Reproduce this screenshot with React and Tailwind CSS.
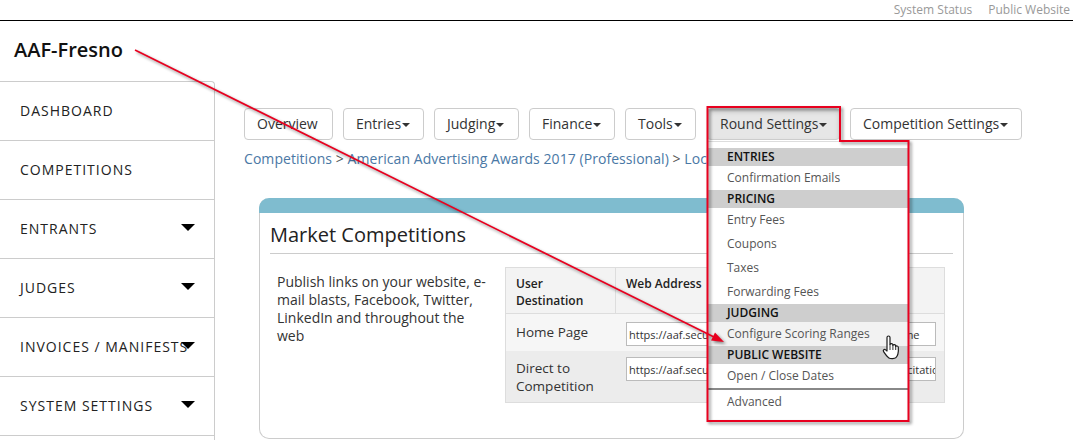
import React from 'react';

const tabs = [
  { label: 'Entries', w: 'w-[81px]' },
  { label: 'Judging', w: 'w-[85px]' },
  { label: 'Finance', w: 'w-[86px]' },
  { label: 'Tools', w: 'w-[71px]' },
];
const navItems = [
  { label: 'Dashboard' },
  { label: 'Competitions' },
  { label: 'Entrants', caret: true },
  { label: 'Judges', caret: true },
  { label: 'Invoices / Manifests', caret: true },
  { label: 'System Settings', caret: true },
  { label: '' },
];

const menu = [
  { head: 'ENTRIES', items: ['Confirmation Emails'] },
  { head: 'PRICING', items: ['Entry Fees', 'Coupons', 'Taxes', 'Forwarding Fees'] },
  { head: 'JUDGING', items: ['Configure Scoring Ranges'] },
  { head: 'PUBLIC WEBSITE', items: ['Open / Close Dates'] },
];

const Caret = () => (
  <span className="ml-px inline-block border-x-[4px] border-t-[4px] border-x-transparent border-t-[#333] align-middle"></span>
);

const Btn = ({ children, active, caret, width }) => (
  <button
    className={`h-[32px] shrink-0 rounded border border-[#ccc] pb-[2px] pl-[12px] text-left text-[14px] text-[#333] whitespace-nowrap ${width} ${active ? 'bg-[#e6e6e6] shadow-[inset_0_3px_5px_rgba(0,0,0,0.125)]' : 'bg-white'}`}
  >
    {children}
    {caret && <Caret />}
  </button>
);

const Hand = () => (
  <svg className="absolute left-[174px] top-[193px]" width="19" height="25" viewBox="0 0 19 25">
    <path
      d="M5 2.5c0-2 3-2 3 0v7c.4-1.2 2.6-1.2 2.9.2v.6c.5-1.100 2.600-.9 2.800.5v.7c.6-.9 2.500-.6 2.600.8.200 2.200.100 4.700-.4 6.700-.4 1.600-1.100 2.800-2 3.700-1.200 1.200-5.500 1.200-7 .3-1.800-1.100-3.800-4-5.300-6.300-1-1.500.8-3 2-1.800L5 16z"
      fill="#fff"
      stroke="#1c1c1c"
      strokeWidth="1.2"
      strokeLinejoin="round"
    />
    <path d="M8 9.500v5.500M10.900 10v5M13.700 11v4" stroke="#1c1c1c" strokeWidth="0.9" fill="none" />
  </svg>
);

const Dropdown = () => (
  <div className="absolute left-[1px] top-[33px] z-10 h-[280px] w-[200px] border-t border-[#ddd] bg-white pt-[6px] text-[12px] leading-[24px] text-[#555]">
    {menu.map((group) => (
      <div key={group.head}>
        <div className="h-[18px] bg-[#cecece] pl-[19px] font-semibold leading-[18px] text-[#111]">{group.head}</div>
        {group.items.map((item) => (
          <div key={item} className={`h-[24px] pl-[19px] ${item.startsWith('Configure') ? 'bg-[#f2f2f2]' : ''}`}>{item}</div>
        ))}
      </div>
    ))}
    <div className="h-[2px] bg-[#888]"></div>
    <div className="pl-[19px]">Advanced</div>
    <Hand />
  </div>
);

const Annotation = () => (
  <svg className="absolute left-0 top-0 z-20 pointer-events-none drop-shadow-[2px_2px_1.5px_rgba(0,0,0,0.45)]" width="1073" height="440" viewBox="0 0 1073 440">
    <path d="M707.5 107 H840 V141 H908.5 V421 H707.500 Z" fill="none" stroke="#e8001f" strokeWidth="2" />
    <path d="M135 50 L716 338" stroke="#e8001f" strokeWidth="1.7" fill="none" />
    <path d="M724 342 L711 340.500 L715 332.500 Z" fill="#e8001f" />
  </svg>
);

export default function App() {
  return (
    <div className="relative h-[440px] w-[1073px] overflow-hidden bg-white font-['Open_Sans',sans-serif] text-[#333]">
      <div className="flex h-[21px] items-center justify-end gap-[16px] border-b border-black pr-[3px] text-[12px] text-[#999]">
        <span>System Status</span>
        <span>Public Website</span>
      </div>

      <div className="h-[60px] pl-[14px] pt-[15px] text-[20px] font-semibold leading-[28px] text-[#111]">AAF-Fresno</div>

      <div className="flex">
        <div className="w-[215px] shrink-0 rounded-tr border-r border-t border-[#ccc]">
          {navItems.map((item, i) => (
            <div key={i} className="relative flex h-[59px] items-center border-b border-[#ccc] pb-[2px] pl-[20px] text-[14px] uppercase tracking-[1px] text-[#222] whitespace-nowrap">
              {item.label}
              {item.caret && (
                <span className="absolute right-[19px] top-[24px] border-x-[7px] border-t-[7px] border-x-transparent border-t-black"></span>
              )}
            </div>
          ))}
        </div>

        <div className="min-w-0 flex-1 pl-[29px] pt-[27px]">
          <div className="flex gap-[10px]">
            <Btn width="w-[89px]">Overview</Btn>
            {tabs.map((t) => <Btn key={t.label} caret width={t.w}>{t.label}</Btn>)}
            <div className="relative ml-px">
              <Btn active caret width="w-[133px]">Round Settings</Btn>
              <Dropdown />
            </div>
            <Btn caret width="w-[172px]">Competition Settings</Btn>
          </div>

          <div className="mt-[9px] text-[14px] leading-[20px] tracking-[0.06px] text-[#4a78a5] whitespace-nowrap">
            Competitions <span className="text-[#555]">&gt;</span> American Advertising Awards 2017 (Professional) <span className="text-[#555]">&gt;</span> Locations
          </div>

          <div className="ml-[15px] mt-[29px] h-[241px] w-[705px] rounded-[10px] border border-[#ccc] border-t-0">
            <div className="-mx-px h-[15px] rounded-t-[10px] bg-[#7fbccf]"></div>
            <div className="mx-[10px] border-b border-[#ccc] pb-[4px] pt-[8px] text-[20px] leading-[28px] text-[#222]">Market Competitions</div>
            <div className="flex pl-[17px] pt-[13px]">
              <p className="w-[215px] pt-[6px] text-[14px] leading-[18px] text-[#333]">
                Publish links on your website, e-mail blasts, Facebook, Twitter, LinkedIn and throughout the web
              </p>
              <div className="ml-[13px] w-[440px] border-b border-l border-r border-[#ddd] text-[13.5px]">
                <div className="flex h-[47px] border-b border-t border-[#ddd] bg-[#f3f3f3] text-[12px] font-semibold leading-[17px] text-[#222]">
                  <div className="w-[110px] border-r border-[#ddd] pl-[10px] pt-[7px]">User<br />Destination</div>
                  <div className="pl-[10px] pt-[7px]">Web Address</div>
                </div>
                <div className="flex h-[37px] bg-[#f6f6f6] pt-[8px]">
                  <div className="w-[110px] pl-[10px] leading-[21px]">Home Page</div>
                  <input readOnly value="https://aaf.secure-platform.com/a/organizations/x/home" className="ml-[10px] h-[24px] w-[310px] border border-[#bbb] bg-white pl-[2px] text-[11px] text-[#333] outline-none" />
                </div>
                <div className="flex h-[51px] bg-[#ececec] pt-[6px]">
                  <div className="w-[110px] pl-[10px] pt-[2px] leading-[18px]">Direct to Competition</div>
                  <input readOnly value="https://aaf.secure-platform.com/a/organizations/x/solicitations/38/home" className="ml-[10px] h-[24px] w-[310px] border border-[#bbb] bg-white pl-[2px] text-[11px] text-[#333] outline-none" />
                </div>
              </div>
            </div>
          </div>
        </div>
      </div>

      <Annotation />
    </div>
  );
}
